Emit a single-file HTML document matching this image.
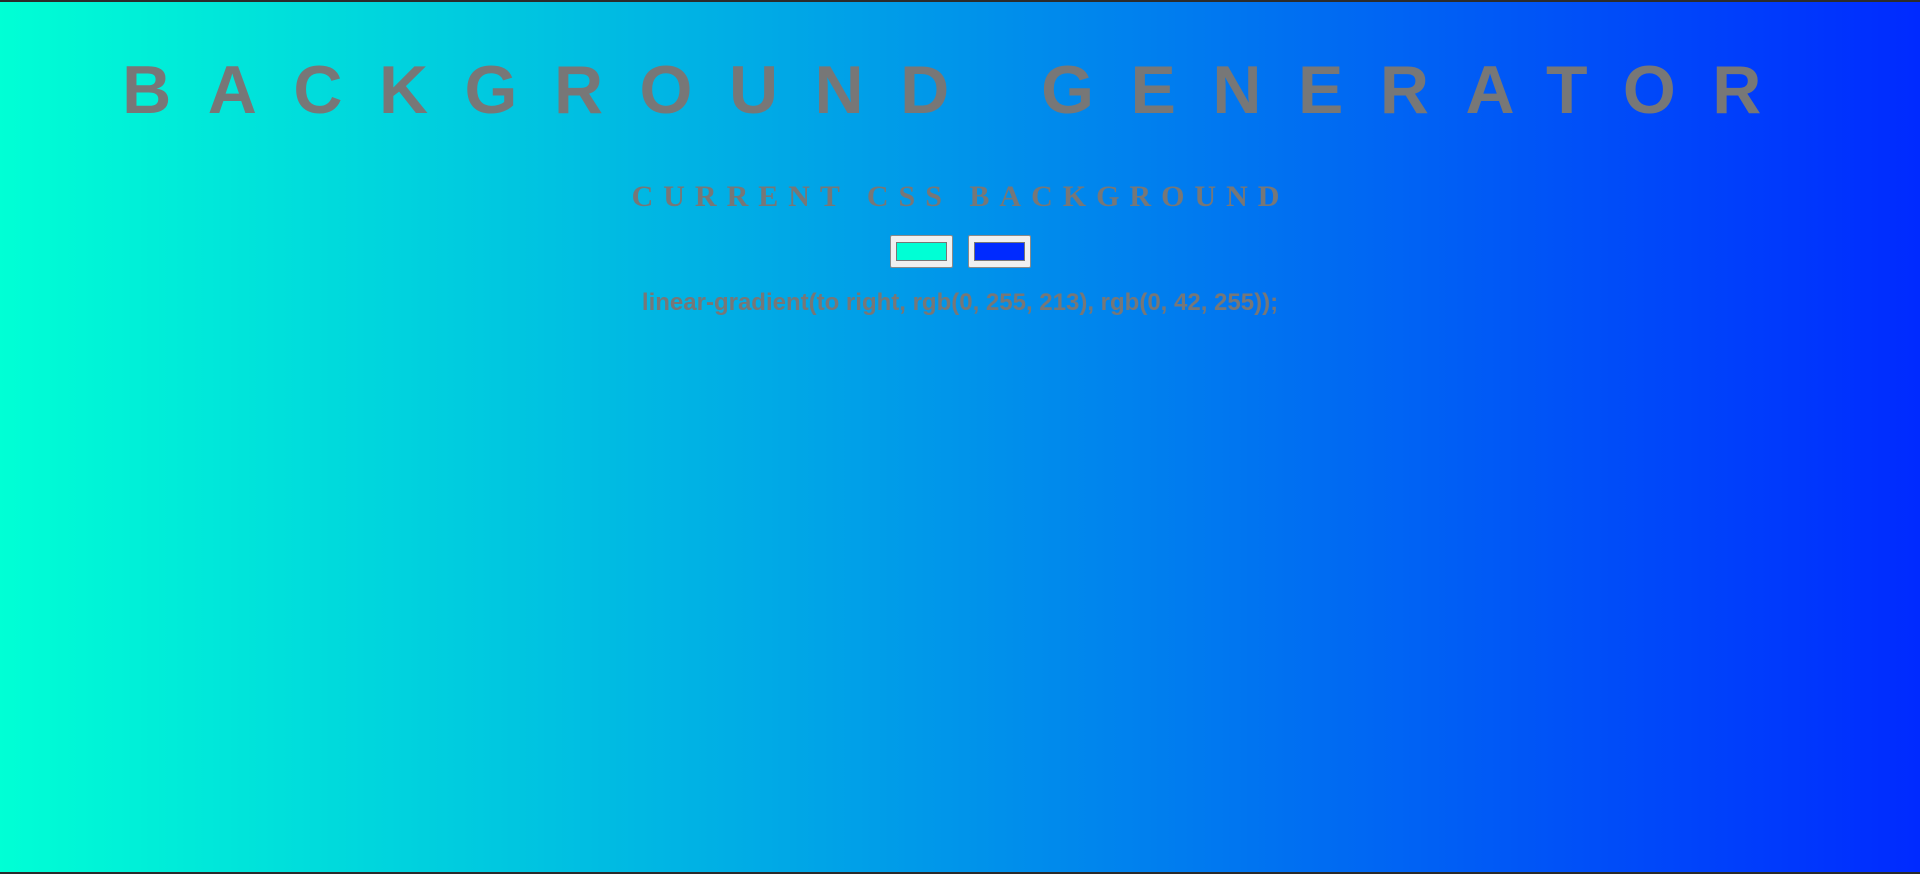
<!DOCTYPE html>
<html><head><style>
html,body{margin:0;padding:0;}
body{width:1920px;height:874px;overflow:hidden;background:linear-gradient(to right,rgb(0,255,213),rgb(0,42,255));border-top:2px solid #2b2b2b;border-bottom:2px solid #2b2b2b;box-sizing:border-box;position:relative;color:#777;}
h1{position:absolute;left:-18px;width:1920px;top:54px;margin:0;text-align:center;font:bold 68px/1 "Liberation Sans",sans-serif;letter-spacing:36.5px;text-indent:36px;}
h3{position:absolute;left:-4px;width:1920px;top:180px;margin:0;text-align:center;font:bold 30px/1 "Liberation Serif",serif;letter-spacing:10px;text-indent:9px;}
.in{position:absolute;top:233px;width:61px;height:31px;background:#f0f0f0;border:1px solid #8a8a8a;border-radius:2px;}
.in div{position:absolute;left:5px;top:6px;width:49px;height:17px;border:1px solid #777;}
p{position:absolute;left:0;width:1920px;top:289px;margin:0;text-align:center;font:bold 24px/1 "Liberation Sans",sans-serif;}
</style></head><body>
<h1>BACKGROUND GENERATOR</h1>
<h3>CURRENT CSS BACKGROUND</h3>
<div class="in" style="left:890px"><div style="background:rgb(0,255,213)"></div></div>
<div class="in" style="left:968px"><div style="background:rgb(0,42,255)"></div></div>
<p>linear-gradient(to right, rgb(0, 255, 213), rgb(0, 42, 255));</p>
</body></html>
